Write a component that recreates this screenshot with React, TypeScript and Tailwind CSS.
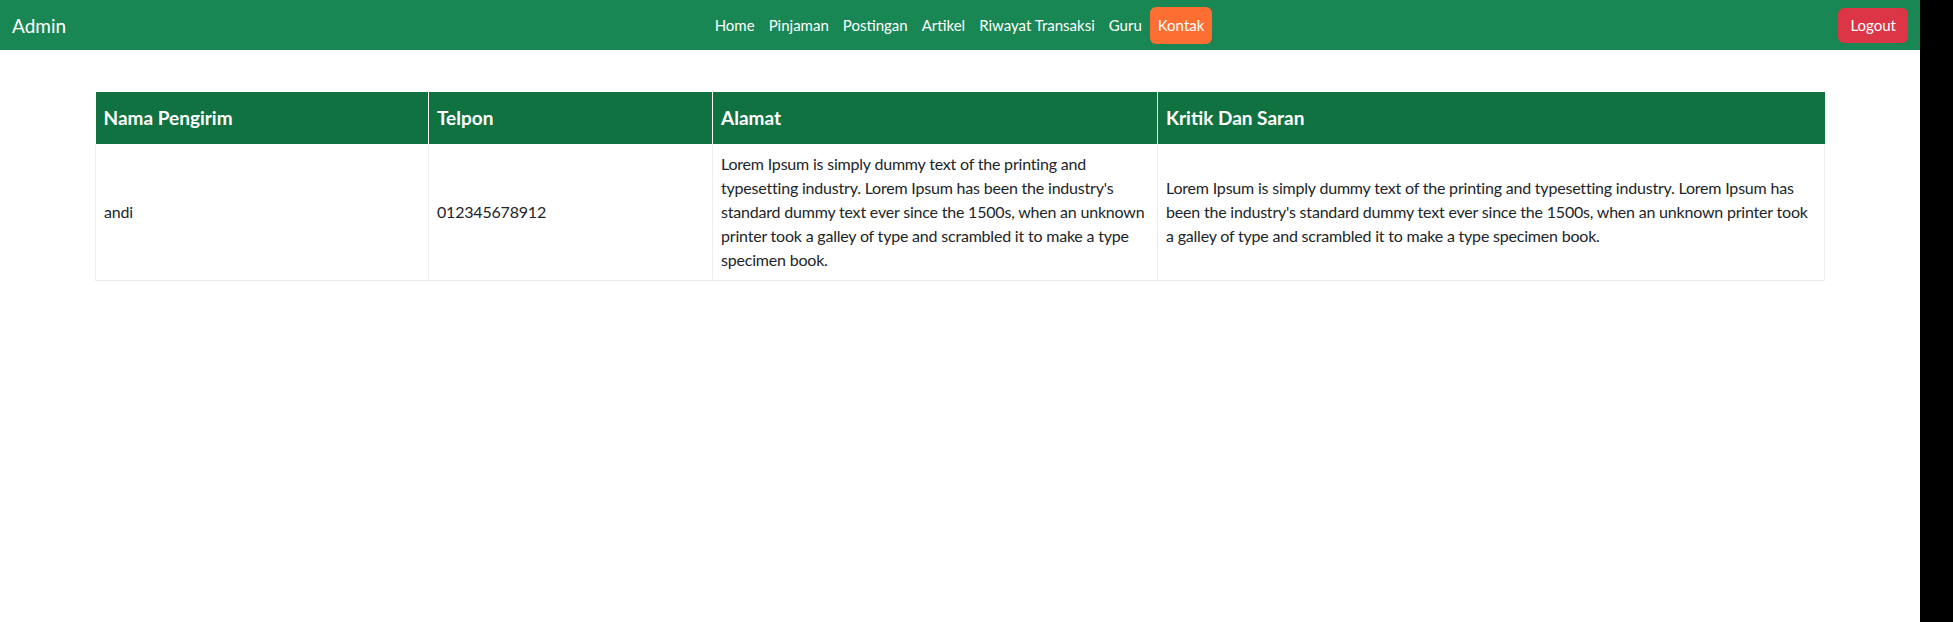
const links = ["Home", "Pinjaman", "Postingan", "Artikel", "Riwayat Transaksi", "Guru"];

const alamat = [
  "Lorem Ipsum is simply dummy text of the printing and",
  "typesetting industry. Lorem Ipsum has been the industry's",
  "standard dummy text ever since the 1500s, when an unknown",
  "printer took a galley of type and scrambled it to make a type",
  "specimen book.",
];

const kritik = [
  "Lorem Ipsum is simply dummy text of the printing and typesetting industry. Lorem Ipsum has",
  "been the industry's standard dummy text ever since the 1500s, when an unknown printer took",
  "a galley of type and scrambled it to make a type specimen book.",
];

const App = () => {
  return (
    <div className="flex min-h-[622px] w-full bg-white font-['Lato',sans-serif]">
      <div className="w-[1920px] shrink-0 bg-white">
        {/* Navbar */}
        <nav className="grid h-[50px] grid-cols-[1fr_auto_1fr] items-center bg-[#198754] px-3">
          <a href="#" className="text-[19px] leading-none text-white">
            Admin
          </a>
          <ul className="flex items-center">
            {links.map((item) => (
              <li key={item}>
                <a href="#" className="block px-[7px] text-[15px] leading-[37px] text-white">
                  {item}
                </a>
              </li>
            ))}
            <li>
              <a
                href="#"
                className="ml-[1px] block rounded-md bg-[#fd6e32] px-2 text-[15px] leading-[37px] text-white"
              >
                Kontak
              </a>
            </li>
          </ul>
          <div className="flex justify-end">
            <button className="h-[35px] rounded-md bg-[#dc3545] px-3 text-[15px] text-white">
              Logout
            </button>
          </div>
        </nav>

        {/* Table */}
        <div className="mx-auto mt-[42px] w-[1730px]">
          <table className="w-full table-fixed border-collapse text-left text-[16px] leading-6 tracking-[-0.2px] text-[#212529]">
            <thead>
              <tr className="bg-[#107241] text-white">
                <th className="w-[333px] border-r border-white px-2 py-[11px] text-[19px] font-bold leading-[30px] tracking-normal">
                  Nama Pengirim
                </th>
                <th className="w-[284px] border-r border-white px-2 py-[11px] text-[19px] font-bold leading-[30px] tracking-normal">
                  Telpon
                </th>
                <th className="w-[445px] border-r border-white px-2 py-[11px] text-[19px] font-bold leading-[30px] tracking-normal">
                  Alamat
                </th>
                <th className="px-2 py-[11px] text-[19px] font-bold leading-[30px] tracking-normal">
                  Kritik Dan Saran
                </th>
              </tr>
            </thead>
            <tbody>
              <tr className="border-b border-[#e9ecef]">
                <td className="border-x border-[#eceeef] p-2 align-middle">andi</td>
                <td className="border-r border-[#eceeef] p-2 align-middle">012345678912</td>
                <td className="border-r border-[#eceeef] p-2 align-middle">
                  {alamat.map((line) => (
                    <span key={line} className="block whitespace-nowrap">
                      {line}
                    </span>
                  ))}
                </td>
                <td className="border-r border-[#eceeef] p-2 align-middle">
                  {kritik.map((line) => (
                    <span key={line} className="block whitespace-nowrap">
                      {line}
                    </span>
                  ))}
                </td>
              </tr>
            </tbody>
          </table>
        </div>
      </div>
      <div className="flex-1 bg-black" />
    </div>
  );
};

export default App;
